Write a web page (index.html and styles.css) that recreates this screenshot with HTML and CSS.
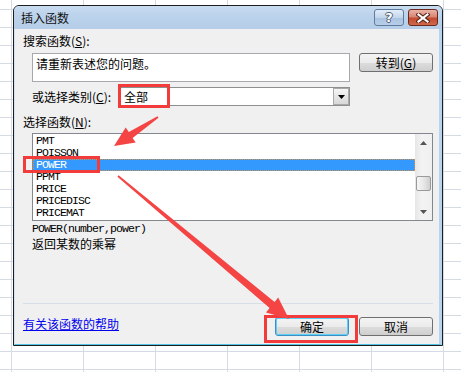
FILE: index.html
```html
<!DOCTYPE html>
<html lang="zh-CN">
<head>
<meta charset="utf-8">
<title>插入函数</title>
<link rel="stylesheet" href="styles.css">
</head>
<body>
<div class="dialog">
  <div class="titlebar">
    <span class="title">插入函数</span>
    <div class="caption-btns">
      <span class="cbtn help">?</span>
      <span class="cbtn close">
        <svg width="14" height="10" viewBox="0 0 14 10">
          <path d="M2.5 1.5 L11.5 8.5 M11.5 1.5 L2.5 8.5" stroke="#5a2418" stroke-width="4.2" stroke-linecap="square"/>
          <path d="M2.5 1.5 L11.5 8.5 M11.5 1.5 L2.5 8.5" stroke="#ffffff" stroke-width="2.2" stroke-linecap="square"/>
        </svg>
      </span>
    </div>
  </div>
  <div class="content">
    <div class="label first">搜索函数(<u>S</u>):</div>
    <div class="row search-row">
      <div class="textbox">请重新表述您的问题。</div>
      <div class="btn">转到(<u>G</u>)</div>
    </div>
    <div class="row cat-row">
      <span class="cat-label">或选择类别(<u>C</u>):</span>
      <div class="select">
        <span class="select-value">全部</span>
        <span class="dd">
          <svg width="7" height="4" viewBox="0 0 7 4"><path d="M0 0 H7 L3.5 4 Z" fill="#000"/></svg>
        </span>
      </div>
    </div>
    <div class="label fn-label">选择函数(<u>N</u>):</div>
    <div class="listbox">
      <ul class="items">
        <li>PMT</li>
        <li>POISSON</li>
        <li class="selected">POWER</li>
        <li>PPMT</li>
        <li>PRICE</li>
        <li>PRICEDISC</li>
        <li>PRICEMAT</li>
      </ul>
      <div class="scrollbar">
        <div class="sb-arrow">
          <svg width="7" height="4" viewBox="0 0 7 4"><path d="M3.5 0 L7 4 H0 Z" fill="#555"/></svg>
        </div>
        <div class="sb-track"><div class="sb-thumb"></div></div>
        <div class="sb-arrow">
          <svg width="7" height="4" viewBox="0 0 7 4"><path d="M0 0 H7 L3.5 4 Z" fill="#555"/></svg>
        </div>
      </div>
    </div>
    <div class="sig">POWER(number,power)</div>
    <div class="desc">返回某数的乘幂</div>
    <div class="footer">
      <a class="help-link">有关该函数的帮助</a>
      <div class="btns">
        <div class="btn default">确定</div>
        <div class="btn">取消</div>
      </div>
    </div>
  </div>
</div>
<svg class="annot" width="461" height="372" viewBox="0 0 461 372">
  <g fill="none" stroke="#f23b3b" stroke-width="3">
    <rect x="119.5" y="85.5" width="49" height="21"/>
    <rect x="24.5" y="157.5" width="74" height="14"/>
    <rect x="265.5" y="316.5" width="91" height="25"/>
  </g>
  <g fill="#f44444">
    <polygon points="114,146 135.7,142.5 132.6,137.9 158.5,117.8 157.5,116.2 128.8,132.1 125.7,127.5"/>
    <polygon points="289,319 266,312.5 269.6,308 117.4,176.8 118.6,175.2 274.6,302 278.2,297.6"/>
  </g>
</svg>
</body>
</html>
```
FILE: styles.css
```css
html, body {
  margin: 0;
  padding: 0;
}
body {
  width: 461px;
  height: 372px;
  overflow: hidden;
  position: relative;
  background-color: #ffffff;
  background-image:
    linear-gradient(90deg, #d5dbe4 1px, transparent 1px),
    linear-gradient(180deg, #d5dbe4 1px, transparent 1px);
  background-size: 72px 18px;
  background-position: 11px 9px;
  font-family: "Noto Sans CJK SC", "DejaVu Sans", sans-serif;
  font-size: 12px;
  color: #000;
}
u { text-decoration: underline; text-underline-offset: 1px; }

.dialog {
  position: absolute;
  left: 13px;
  top: 5px;
  width: 430px;
  height: 341px;
  box-sizing: border-box;
  border: 1px solid #1e1e1e;
  border-radius: 6px 6px 0 0;
  background: #bcd2ea;
  display: flex;
  flex-direction: column;
}
.titlebar {
  height: 23px;
  flex: none;
  display: flex;
  align-items: flex-start;
  justify-content: space-between;
  padding: 0 4px 0 7px;
  border-radius: 5px 5px 0 0;
  background: linear-gradient(180deg, #c9dcf0 0%, #bcd3ec 40%, #b5cde8 100%);
}
.title {
  line-height: 14px;
  margin-top: 5px;
  font-size: 12px;
  color: #111;
}
.caption-btns {
  display: flex;
  gap: 4px;
  margin-top: 3px;
}
.cbtn {
  width: 30px;
  height: 17px;
  box-sizing: border-box;
  border-radius: 3px;
  display: flex;
  align-items: center;
  justify-content: center;
}
.help {
  border: 1px solid #5e7a9c;
  background: linear-gradient(180deg, #e3edf8 0%, #c3d6ec 50%, #a9c2e0 51%, #b8cfe9 100%);
  font-family: "DejaVu Sans", sans-serif;
  font-weight: bold;
  font-size: 13px;
  line-height: 15px;
  color: #fff;
  text-shadow: -1px 0 #4c5d74, 1px 0 #4c5d74, 0 -1px #4c5d74, 0 1px #4c5d74;
}
.close {
  border: 1px solid #6b2a1c;
  background: linear-gradient(180deg, #eab3a6 0%, #d98675 45%, #c4492f 55%, #d06a4c 100%);
}

.content {
  flex: 1;
  display: flex;
  flex-direction: column;
  background: #f0f0f0;
  border-left: 1px solid #d3e3f3;
  border-right: 3px solid #b6d4ee;
  border-bottom: 1px solid #52c5e6;
  padding: 0 6px 8px 8px;
}
.label {
  line-height: 14px;
}
.label.first { margin-top: 5px; }
.row {
  display: flex;
  margin-left: 9px;
}
.search-row {
  margin-top: 5px;
  gap: 9px;
  align-items: flex-start;
}
.textbox {
  width: 318px;
  height: 29px;
  box-sizing: border-box;
  border: 1px solid #a6a8ae;
  background: #fff;
  padding: 3px 0 0 3px;
  line-height: 14px;
}
.btn {
  width: 74px;
  height: 19px;
  box-sizing: border-box;
  border: 1px solid #707070;
  border-radius: 3px;
  background: linear-gradient(180deg, #f4f4f4 0%, #ebebeb 50%, #dddddd 51%, #cfcfcf 100%);
  display: flex;
  align-items: center;
  justify-content: center;
  line-height: 14px;
}
.btn.default {
  border-color: #3c8fc4;
  box-shadow: inset 0 0 0 1px #5fd0f5;
}
.cat-row {
  margin-top: 5px;
  align-items: center;
}
.cat-label {
  width: 88px;
  line-height: 14px;
}
.select {
  width: 230px;
  height: 19px;
  box-sizing: border-box;
  border: 1px solid #8e8f8f;
  background: #fff;
  display: flex;
  align-items: center;
  justify-content: space-between;
}
.select-value {
  padding-left: 3px;
  line-height: 14px;
}
.dd {
  width: 16px;
  height: 17px;
  box-sizing: border-box;
  border: 1px solid #a9a9a9;
  background: linear-gradient(180deg, #f6f6f6 0%, #e6e6e6 50%, #d8d8d8 100%);
  display: flex;
  align-items: center;
  justify-content: center;
}
.fn-label { margin-top: 9px; }

.listbox {
  margin-top: 4px;
  margin-left: 9px;
  width: 401px;
  height: 88px;
  box-sizing: border-box;
  border: 1px solid #828790;
  background: #fff;
  display: flex;
}
.items {
  flex: 1;
  list-style: none;
  margin: 0;
  padding: 1px 0 0 0;
}
.items li {
  height: 12px;
  line-height: 12px;
  padding-left: 3px;
  font-family: "Liberation Mono", "DejaVu Sans Mono", monospace;
  font-size: 11.5px;
  letter-spacing: -0.9px;
}
.items li.selected {
  background: #3399ff;
  color: #fff;
  outline: 1px dotted #d8913a;
  outline-offset: -1px;
}
.scrollbar {
  width: 17px;
  display: flex;
  flex-direction: column;
  background: linear-gradient(90deg, #e6e6e6, #f3f3f3 40%, #f0f0f0);
}
.sb-arrow {
  height: 17px;
  display: flex;
  align-items: center;
  justify-content: center;
}
.sb-track {
  flex: 1;
  padding-top: 25px;
  display: flex;
  justify-content: center;
}
.sb-thumb {
  width: 15px;
  height: 15px;
  box-sizing: border-box;
  border: 1px solid #9a9a9a;
  border-radius: 2px;
  background: linear-gradient(90deg, #f6f6f6 0%, #e8e8e8 50%, #cfcfcf 100%);
}
.sig {
  margin-top: 2px;
  margin-left: 9px;
  line-height: 12px;
  font-family: "Liberation Mono", "DejaVu Sans Mono", monospace;
  font-size: 11.5px;
  letter-spacing: -0.9px;
}
.desc {
  margin-top: 2px;
  margin-left: 9px;
  line-height: 14px;
}
.footer {
  margin-top: auto;
  border-top: 1px solid #d6dee7;
  padding-top: 13px;
  display: flex;
  justify-content: space-between;
  align-items: flex-start;
}
.help-link {
  color: #0000ee;
  text-decoration: underline;
  line-height: 14px;
}
.btns {
  display: flex;
  gap: 10px;
}

.annot {
  position: absolute;
  left: 0;
  top: 0;
  pointer-events: none;
}
```
